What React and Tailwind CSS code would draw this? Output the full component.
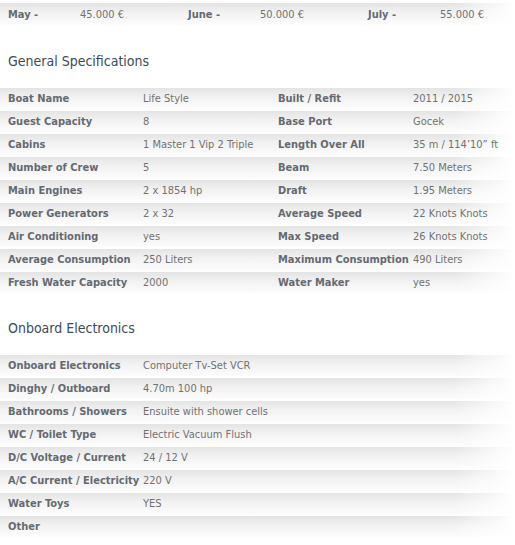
import React from "react";

const general = [
  ["Boat Name", "Life Style", "Built / Refit", "2011 / 2015"],
  ["Guest Capacity", "8", "Base Port", "Gocek"],
  ["Cabins", "1 Master 1 Vip 2 Triple", "Length Over All", "35 m / 114’10” ft"],
  ["Number of Crew", "5", "Beam", "7.50 Meters"],
  ["Main Engines", "2 x 1854 hp", "Draft", "1.95 Meters"],
  ["Power Generators", "2 x 32", "Average Speed", "22 Knots Knots"],
  ["Air Conditioning", "yes", "Max Speed", "26 Knots Knots"],
  ["Average Consumption", "250 Liters", "Maximum Consumption", "490 Liters"],
  ["Fresh Water Capacity", "2000", "Water Maker", "yes"],
];

const electronics = [
  ["Onboard Electronics", "Computer Tv-Set VCR"],
  ["Dinghy / Outboard", "4.70m 100 hp"],
  ["Bathrooms / Showers", "Ensuite with shower cells"],
  ["WC / Toilet Type", "Electric Vacuum Flush"],
  ["D/C Voltage / Current", "24 / 12 V"],
  ["A/C Current / Electricity", "220 V"],
  ["Water Toys", "YES"],
  ["Other", ""],
];

const rowBg =
  "bg-[linear-gradient(to_right,rgba(255,255,255,0)_88%,#ffffff_100%),linear-gradient(to_bottom,#e4e4e4_0%,#f2f2f2_45%,#fcfcfc_100%)]";

const Label = ({ children }) => (
  <div className="w-[135px] shrink-0 pl-2 font-bold text-[#656a72] whitespace-nowrap">{children}</div>
);
const Value = ({ children, w = "w-[135px]" }) => (
  <div className={`${w} shrink-0 pl-2 text-[#727272] whitespace-nowrap`}>{children}</div>
);

export default function App() {
  return (
    <div
      className="w-[515px] h-[545px] overflow-hidden bg-white text-[11px] leading-none"
      style={{ fontFamily: '"DejaVu Sans Condensed", "DejaVu Sans", Tahoma, sans-serif' }}
    >
      <div className="pt-[3px]">
        <div className={`flex items-center h-[22px] ${rowBg}`}>
          {[
            ["May -", "45.000 €"],
            ["June -", "50.000 €"],
            ["July -", "55.000 €"],
          ].map(([m, p]) => (
            <div key={m} className="flex w-[180px] shrink-0">
              <div className="w-[72px] pl-2 font-bold text-[#656a72]">{m}</div>
              <div className="pl-2 text-[#727272]">{p}</div>
            </div>
          ))}
        </div>
      </div>

      <div className="h-[61px] flex items-center pl-2 pt-[11px] text-[14px] text-[#3d4a5c]">
        General Specifications
      </div>

      <div>
        {general.map((r) => (
          <div key={r[0]} className={`flex items-center h-[23px] border-t-2 border-white ${rowBg}`}>
            <Label>{r[0]}</Label>
            <Value>{r[1]}</Value>
            <Label>{r[2]}</Label>
            <Value w="w-[110px]">{r[3]}</Value>
          </div>
        ))}
      </div>

      <div className="h-[60px] flex items-center pl-2 pt-[10px] text-[14px] text-[#3d4a5c]">
        Onboard Electronics
      </div>

      <div>
        {electronics.map((r) => (
          <div key={r[0]} className={`flex items-center h-[23px] border-t-2 border-white ${rowBg}`}>
            <Label>{r[0]}</Label>
            <Value>{r[1]}</Value>
          </div>
        ))}
      </div>
    </div>
  );
}
